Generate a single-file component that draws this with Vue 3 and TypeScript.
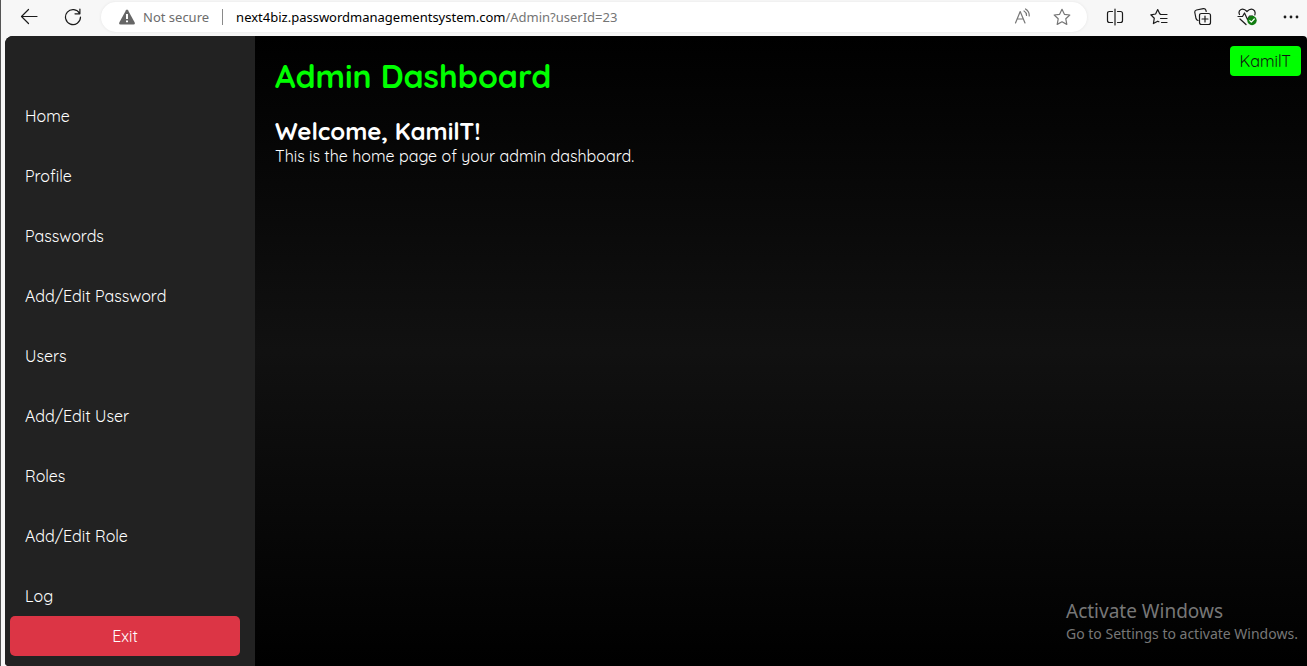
<script setup lang="ts">
import { ref } from 'vue'

interface MenuItem {
  label: string
  href: string
}

const userName = ref<string>('KamilT')

const menu: MenuItem[] = [
  { label: 'Home', href: '#home' },
  { label: 'Profile', href: '#profile' },
  { label: 'Passwords', href: '#passwords' },
  { label: 'Add/Edit Password', href: '#edit-password' },
  { label: 'Users', href: '#users' },
  { label: 'Add/Edit User', href: '#edit-user' },
  { label: 'Roles', href: '#roles' },
  { label: 'Add/Edit Role', href: '#edit-role' },
  { label: 'Log', href: '#log' },
]
</script>

<template>
  <div class="window">
    <header class="toolbar">
      <div class="nav-buttons">
        <button type="button" aria-label="Back">
          <svg width="18" height="18" viewBox="0 0 18 18"><path d="M17 8.5H1.5M8.5 1.5l-7 7 7 7" /></svg>
        </button>
        <button type="button" aria-label="Refresh">
          <svg width="18" height="18" viewBox="0 0 18 18"><path d="M15.6 5.5A7.5 7.5 0 1 0 16.5 9M15.9 1v4.8H11" /></svg>
        </button>
      </div>

      <div class="address">
        <svg class="warning" width="16" height="16" viewBox="0 0 16 16">
          <path class="warning-shape" d="M7 1.2Q8-.4 9 1.2l6.7 12.2Q16.4 15.5 14.5 15.5H1.5Q-.4 15.5.3 13.4Z" />
          <path class="warning-mark" d="M8 5v5M8 11.5v1.7" />
        </svg>
        <span class="security">Not secure</span>
        <span class="divider"></span>
        <span class="url">next4biz.passwordmanagementsystem.com<span class="path">/Admin?userId=23</span></span>
        <div class="address-actions">
          <button type="button" aria-label="Read aloud">
            <svg width="18" height="18" viewBox="0 0 18 18"><path d="M2.5 15 7.2 3.5 12 15M4.2 11h6M11 3q2.600 1.500 2.500 4.500M12.500 1q4 2.500 3.700 7" /></svg>
          </button>
          <button type="button" aria-label="Add to favorites">
            <svg width="18" height="18" viewBox="0 0 18 18"><path d="m9 1.3 2.4 5 5.4.7-4 3.8 1 5.6L9 13.8l-4.800 2.600 1-5.600-4-3.800 5.400-.7Z" /></svg>
          </button>
        </div>
      </div>

      <div class="tools">
        <button type="button" aria-label="Split screen">
          <svg width="18" height="18" viewBox="0 0 18 18"><path d="M6.500 3.500h-3Q1.500 3.500 1.500 5.500v7q0 2 2 2h3M11.500 3.500h3q2 0 2 2v7q0 2-2 2h-3M9 1v16" /></svg>
        </button>
        <button type="button" aria-label="Favorites">
          <svg width="18" height="18" viewBox="0 0 18 18"><path d="M10.500 6.200 9.800 6 7.700 1.500 5.600 6l-4.800.8 3.500 3.400-.9 5.400 4.300-2.400 1.200.6M10.500 6.500H17M10.500 10.500H17M11.500 14.500H17" /></svg>
        </button>
        <button type="button" aria-label="Collections">
          <svg width="18" height="18" viewBox="0 0 18 18"><path d="M4 12.500Q2.500 12 2 10.500L.8 4.500Q.5 2.500 2.500 2l6.800-1.300q2-.3 2.600 1.500l.3 1.300M7.500 5.500h7q2 0 2 2v7q0 2-2 2h-7q-2 0-2-2v-7q0-2 2-2ZM11 8v6M8 11h6" /></svg>
        </button>
        <button type="button" aria-label="Browser essentials">
          <svg width="20" height="18" viewBox="0 0 20 18">
            <path d="M2.500 6.500Q1 3 4 1.500q3-1.200 6 2 3-3.200 6-2 3 1.500 1.800 5.500M1 8.500h4.500L7.500 5l3 6.500L12.500 8h3M3 11l6 5.500" />
            <circle class="status" cx="15" cy="12.500" r="4.700" />
            <path class="status-mark" d="m12.800 12.700 1.500 1.500 3-3.200" />
          </svg>
        </button>
        <button type="button" aria-label="Settings and more">
          <svg class="dots" width="18" height="18" viewBox="0 0 18 18"><circle cx="3" cy="9" r="1.400" /><circle cx="9" cy="9" r="1.400" /><circle cx="15" cy="9" r="1.400" /></svg>
        </button>
      </div>
    </header>

    <div class="page">
      <aside class="sidebar">
        <nav>
          <a v-for="item in menu" :key="item.label" :href="item.href">{{ item.label }}</a>
        </nav>
        <button class="exit" type="button">Exit</button>
      </aside>
      <main class="content">
        <div class="text">
          <h1>Admin Dashboard</h1>
          <h2>Welcome, {{ userName }}!</h2>
          <p>This is the home page of your admin dashboard.</p>
        </div>
        <button class="user" type="button">{{ userName }}</button>
      </main>
    </div>

    <div class="watermark">
      <div class="watermark-title">Activate Windows</div>
      <div>Go to Settings to activate Windows.</div>
    </div>
  </div>
</template>

<style>
body {
  margin: 0;
}
</style>

<style scoped>
.window {
  position: relative;
  box-sizing: border-box;
  display: flex;
  flex-direction: column;
  min-height: 100vh;
  border-left: 1px solid #555;
  background: #f7f7f7;
  font-family: Quicksand, Inter, sans-serif;
}

button {
  border: 0;
  padding: 0;
  background: none;
  font: inherit;
  cursor: pointer;
}

svg {
  display: block;
  fill: none;
  stroke: #1b1b1b;
  stroke-width: 1.2;
  stroke-linecap: round;
  stroke-linejoin: round;
}

.toolbar {
  display: flex;
  align-items: center;
  gap: 13px;
  height: 34px;
  padding: 0 1px 2px 13px;
  font: 13px/20px "Noto Sans", "Open Sans", sans-serif;
}

.nav-buttons,
.tools {
  display: flex;
  gap: 14px;
}

.toolbar button {
  display: flex;
  align-items: center;
  justify-content: center;
  width: 30px;
  height: 30px;
}

.address {
  display: flex;
  flex: 1;
  align-items: center;
  height: 30px;
  padding: 0 10px 0 18px;
  border-radius: 15px;
  background: #fff;
  box-shadow: 0 0 3px #e4e4e4;
}

.warning-shape {
  fill: #666;
  stroke: none;
}

.warning-mark {
  stroke: #fff;
  stroke-width: 2;
  stroke-linecap: butt;
}

.security {
  margin-left: 8px;
  color: #6d6d6d;
}

.divider {
  width: 1px;
  height: 16px;
  margin: 0 13px;
  background: #8a8a8a;
}

.url {
  flex: 1;
  color: #000;
}

.path {
  color: #757575;
}

.address-actions {
  display: flex;
  gap: 10px;
}

.address-actions svg {
  stroke: #777;
}

.status {
  fill: #107c10;
  stroke: none;
}

.status-mark {
  stroke: #fff;
}

.dots {
  fill: #1b1b1b;
  stroke: none;
}

.page {
  display: flex;
  flex: 1;
  margin-left: 4px;
  overflow: hidden;
  border-radius: 8px 4px 0 4px;
  background: linear-gradient(to bottom, #000, #111, #000);
  color: #fff;
  font-size: 16px;
  line-height: 20px;
}

.sidebar {
  box-sizing: border-box;
  display: flex;
  flex-direction: column;
  justify-content: space-between;
  width: 250px;
  padding: 70px 15px 10px 5px;
  background: #222;
}

nav {
  display: flex;
  flex-direction: column;
  gap: 40px;
  padding-left: 15px;
}

nav a {
  color: #fff;
  text-decoration: none;
}

.exit {
  height: 40px;
  border-radius: 5px;
  background: #dc3545;
  color: #fff;
}

.content {
  display: flex;
  flex: 1;
  align-items: flex-start;
  justify-content: space-between;
  padding: 10px 6px 20px 20px;
}

.text {
  padding-top: 10px;
}

h1 {
  margin: 0 0 20px;
  color: #0f0;
  font-size: 32px;
  line-height: 40px;
}

h2 {
  margin: 0;
  font-size: 24px;
  line-height: 30px;
}

p {
  margin: 0;
}

.user {
  height: 30px;
  padding: 0 10px;
  border-radius: 4px;
  background: #0f0;
  color: #111;
}

.watermark {
  position: absolute;
  right: 5px;
  bottom: 22px;
  min-width: 236px;
  color: #777;
  font: 14px/20px "Noto Sans", sans-serif;
}

.watermark-title {
  font-size: 19px;
  line-height: 26px;
}
</style>
